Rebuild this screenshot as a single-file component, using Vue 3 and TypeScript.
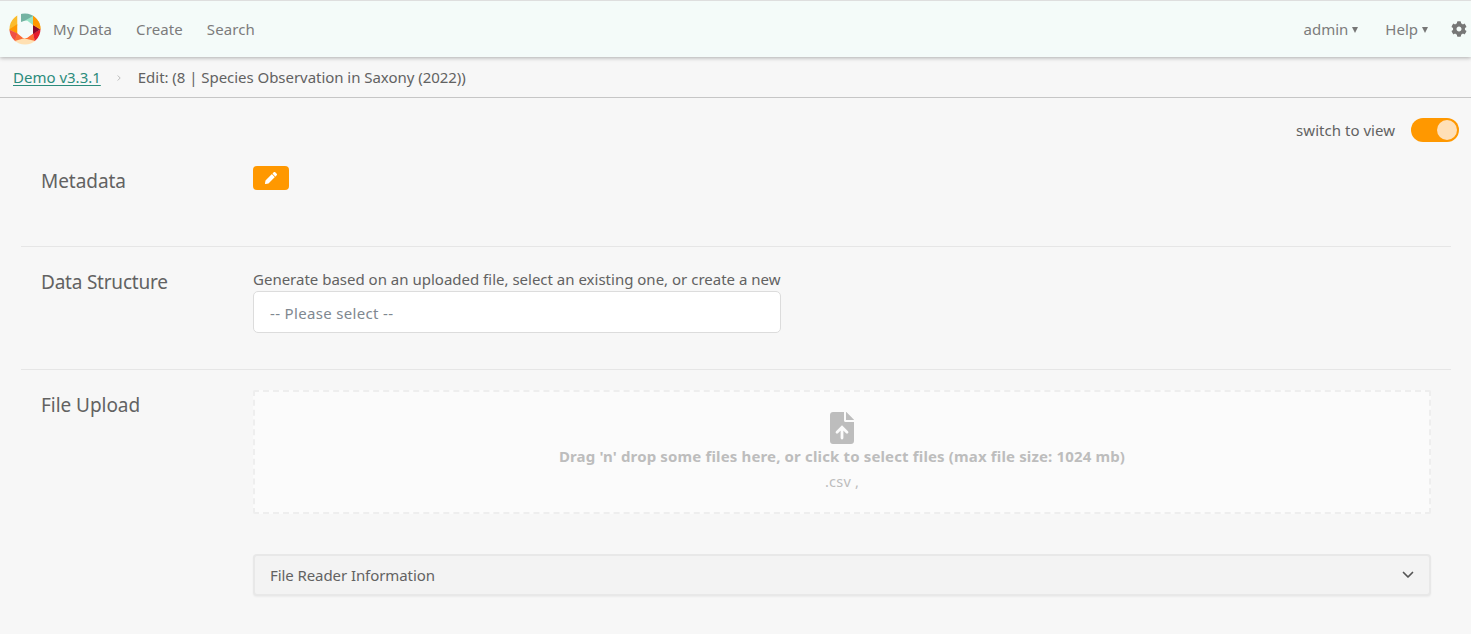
<script setup lang="ts">
import { ref } from 'vue'

const mainLinks: string[] = ['My Data', 'Create', 'Search']
const userMenus: string[] = ['admin', 'Help']
const editing = ref<boolean>(true)
</script>

<template>
  <div class="page">
    <header class="navbar">
      <svg class="logo" viewBox="0 0 32 32">
        <defs><clipPath id="ring"><path clip-rule="evenodd" d="M16 .500a15.500 15.500 0 1 0 0 31a15.500 15.500 0 1 0 0-31zM15 8.500L8.500 12V20.500L14 25H18L24 20.500V12L18 7.500z" /></clipPath></defs>
        <g clip-path="url(#ring)">
          <path fill="#fbbc2c" d="M0 0H8.500V12.500L0 18z" />
          <path fill="#ff9800" d="M8.500 11V21L0 16.500z" />
          <path fill="#ef5046" d="M0 16.500L8.500 20.500L5 32L0 28z" />
          <path fill="#fb6b35" d="M8.500 20L17 26L5 29z" />
          <path fill="#ffe0b2" d="M4 28.500L16 25L28 28.500L20 32H10z" />
          <path fill="#ff7031" d="M16 25.500L24 20.500L26 28z" />
          <path fill="#e51c2b" d="M24 20.500L32 16V28L26 29z" />
          <path fill="#8b0929" d="M24 11.500L32 16L24 21z" />
          <path fill="#fbb42c" d="M24 12L32 17V5z" />
          <path fill="#ff9800" d="M24 0L32 5V16L24 12z" />
          <path fill="#74b3a2" d="M12 0H24V5L12 9z" />
          <path fill="#98e4c6" d="M16 7.500L24 3V13z" />
        </g>
        <path fill="#f4fbf9" d="M8.500 0H12V10L8.500 12z" />
      </svg>
      <nav class="links"><a v-for="l in mainLinks" :key="l">{{ l }}</a></nav>
      <nav class="user">
        <a v-for="m in userMenus" :key="m">{{ m }}<svg class="caret" viewBox="0 0 6 6"><path d="M0 0H6L3 6z" /></svg></a>
        <svg class="gear" viewBox="0 0 512 512"><path d="M487.400 315.700l-42.600-24.600c4.300-23.200 4.300-47 0-70.200l42.600-24.600c4.900-2.800 7.100-8.600 5.500-14-11.100-35.600-30-67.800-54.700-94.600-3.800-4.100-10-5.100-14.800-2.300L380.800 110c-17.900-15.400-38.500-27.300-60.800-35.100V25.800c0-5.600-3.900-10.500-9.400-11.700-36.700-8.200-74.300-7.800-109.200 0-5.500 1.200-9.400 6.100-9.400 11.700V75c-22.200 7.900-42.800 19.800-60.800 35.100L88.700 85.500c-4.900-2.800-11-1.900-14.800 2.300-24.700 26.700-43.600 58.900-54.700 94.600-1.700 5.400.6 11.200 5.500 14L67.300 221c-4.300 23.200-4.300 47 0 70.200l-42.600 24.600c-4.900 2.800-7.100 8.600-5.500 14 11.100 35.600 30 67.800 54.700 94.600 3.800 4.100 10 5.100 14.800 2.300l42.600-24.600c17.900 15.400 38.500 27.300 60.800 35.100v49.200c0 5.600 3.900 10.500 9.400 11.700 36.700 8.200 74.300 7.800 109.200 0 5.500-1.200 9.400-6.100 9.400-11.700v-49.200c22.200-7.900 42.800-19.800 60.800-35.100l42.600 24.600c4.900 2.800 11 1.900 14.800-2.300 24.700-26.700 43.600-58.900 54.700-94.600 1.500-5.500-.7-11.300-5.600-14.100zM256 336c-44.100 0-80-35.900-80-80s35.900-80 80-80 80 35.900 80 80-35.900 80-80 80z" /></svg>
      </nav>
    </header>

    <div class="breadcrumb">
      <a class="tenant">Demo v3.3.1</a>
      <svg class="sep" viewBox="0 0 4 6"><path d="M.7.500L3.200 3L.7 5.500" /></svg>
      <span class="title">Edit: (8 | Species Observation in Saxony (2022))</span>
    </div>

    <div class="mode">
      <span>switch to view</span>
      <button class="toggle" :class="{ on: editing }" @click="editing = !editing"><i></i></button>
    </div>

    <main>
      <section class="metadata">
        <h2>Metadata</h2>
        <div class="body">
          <button class="edit"><svg viewBox="0 0 512 512"><path d="M497.900 142.100l-46.100 46.100c-4.700 4.700-12.300 4.700-17 0l-111-111c-4.700-4.700-4.700-12.300 0-17l46.100-46.100c18.700-18.700 49.100-18.700 67.900 0l60.100 60.100c18.800 18.700 18.800 49.100 0 67.900zM284.200 99.800L21.600 362.400.4 483.900c-2.900 16.400 11.400 30.600 27.800 27.800l121.500-21.300 262.600-262.600c4.700-4.700 4.700-12.300 0-17l-111-111c-4.800-4.700-12.400-4.700-17.100 0z" /></svg></button>
        </div>
      </section>

      <section class="structure">
        <h2 class="tight">Data Structure</h2>
        <div class="body">
          <label class="hint">Generate based on an uploaded file, select an existing one, or create a new</label>
          <div class="select">-- Please select --</div>
        </div>
      </section>

      <section class="upload">
        <h2>File Upload</h2>
        <div class="body">
          <div class="dropzone">
            <svg viewBox="0 0 384 512"><path d="M224 136V0H48C21 0 0 21 0 48v416c0 27 21 48 48 48h288c27 0 48-21 48-48V160H248c-13 0-24-11-24-24z" /><path d="M256 0v128h128v-6L262 0z" /><path class="arrow" d="M192 416V248M112 324L192 244L272 324" /></svg>
            <b>Drag 'n' drop some files here, or click to select files (max file size: 1024 mb)</b>
            <span class="types">.csv ,</span>
          </div>
          <div class="accordion">
            <span>File Reader Information</span>
            <svg viewBox="0 0 12 8"><path d="M1.500 1.500L6 6L10.500 1.500" /></svg>
          </div>
        </div>
      </section>
    </main>
  </div>
</template>

<style>
body { background: #f7f7f7; }
</style>

<style scoped>
.page { box-sizing: border-box; height: 634px; overflow: hidden; background: #f7f7f7; color: #626262; font: 15px/24px "Noto Sans", "Open Sans", sans-serif; }
.page * { box-sizing: border-box; }
.navbar { display: flex; align-items: center; position: relative; height: 57px; padding-left: 9px; background: #f4fbf9; border-top: 1px solid #dedede; box-shadow: 0 1px 4px rgba(0, 0, 0, .3); color: #7c7c7c; }
.logo { width: 32px; height: 32px; margin-bottom: 1px; }
.links { display: flex; gap: 24px; margin-left: 12px; letter-spacing: .1px; }
.user { display: flex; align-items: center; margin-left: auto; margin-right: 4px; }
.user a { margin-right: 27px; }
.user a + a { margin-right: 23px; }
.caret { width: 6px; height: 6px; margin-left: 4px; vertical-align: 2px; fill: #777; }
.gear { width: 16px; height: 16px; margin-bottom: 1px; fill: #777; }
.breadcrumb { display: flex; align-items: center; height: 41px; padding-left: 13px; border-bottom: 1px solid #c6c6c6; }
.tenant { color: #2c8c7c; text-decoration: underline; text-underline-offset: 2px; }
.sep { width: 4px; height: 6px; margin: 2px 17px 0 16px; fill: none; stroke: #bbb; }
.title { letter-spacing: -.04px; }
.mode { display: flex; justify-content: flex-end; align-items: center; height: 24px; margin: 20px 12px 0 0; letter-spacing: .03px; }
.toggle { display: flex; width: 48px; height: 24px; margin-left: 16px; padding: 2px; border: 0; border-radius: 12px; background: #bbb; }
.toggle.on { justify-content: flex-end; background: #ff9800; }
.toggle i { width: 20px; height: 20px; border-radius: 50%; background: #ffe0b8; }
main { padding: 0 20px 0 21px; }
section { display: flex; padding: 20px 20px 0; }
section + section { border-top: 1px solid #e6e6e6; }
h2 { width: 212px; flex: none; margin: 0; font-size: 19px; line-height: 30px; font-weight: 400; letter-spacing: -.05px; }
h2.tight { letter-spacing: -.22px; }
.body { flex: 1; }
.metadata { height: 104px; padding-top: 24px; }
.structure { height: 123px; }
.edit { display: flex; align-items: center; justify-content: center; width: 36px; height: 24px; padding: 0; border: 0; border-radius: 4px; background: #ff9800; }
.edit svg { width: 12px; height: 12px; fill: #fff; }
.hint { display: block; }
.select { width: 528px; height: 42px; padding-left: 16px; line-height: 42px; color: #7f8890; letter-spacing: .33px; background: #fff; border: 1px solid #dcdcdc; border-radius: 5px; }
.dropzone { display: flex; flex-direction: column; align-items: center; height: 124px; padding-top: 20px; background: #fbfbfb; border: 2px dashed #eee; border-radius: 2px; color: #bdbdbd; }
.dropzone svg { width: 24px; height: 32px; fill: #bdbdbd; }
.dropzone b { letter-spacing: .145px; }
.dropzone .arrow { fill: none; stroke: #fbfbfb; stroke-width: 44; stroke-linecap: round; }
.types { font-size: 14.500px; line-height: 26px; letter-spacing: .2px; }
.accordion { display: flex; align-items: center; justify-content: space-between; height: 42px; margin-top: 40px; padding: 0 15px; background: #f3f3f3; border: 2px solid #e8e8e8; border-radius: 4px; box-shadow: 0 1px 2px rgba(0, 0, 0, .05); letter-spacing: -.08px; }
.accordion svg { width: 12px; height: 8px; fill: none; stroke: #555; stroke-width: 1.700; stroke-linecap: round; stroke-linejoin: round; }
</style>
